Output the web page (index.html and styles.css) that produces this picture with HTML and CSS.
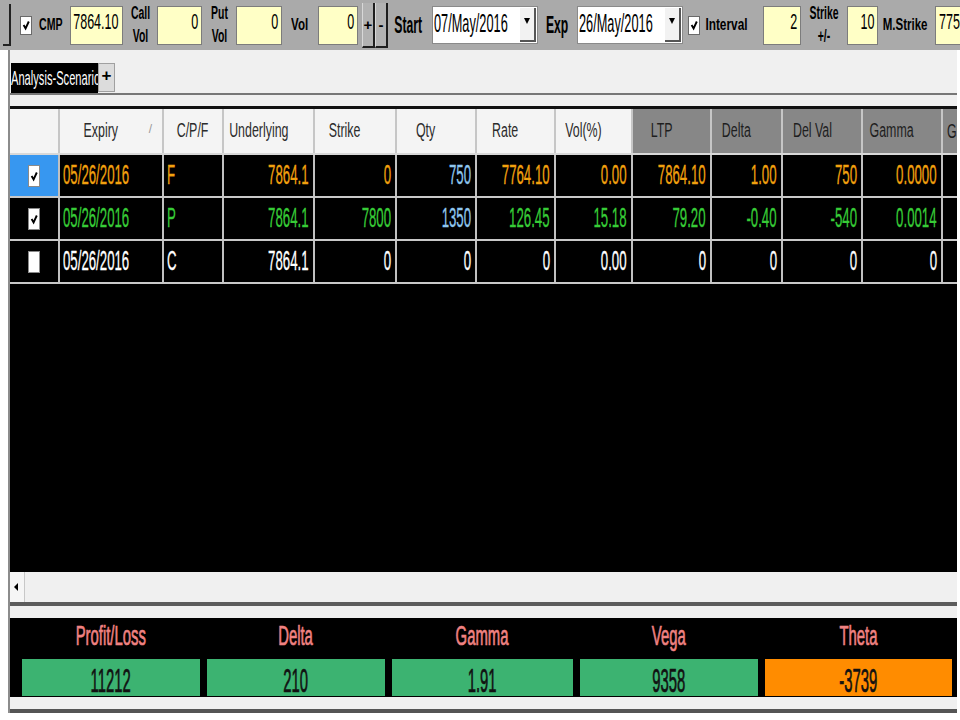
FILE: index.html
```html
<!DOCTYPE html>
<html lang="en">

<head>
    <meta charset="UTF-8">
    <title>Analysis-Scenario</title>
    <link rel="stylesheet" href="styles.css">
</head>

<body>
    <div class="toolbar">
        <div class="splitter"></div>
        <div class="tcb cb-cmp">
            <svg viewBox="0 0 10 14" preserveAspectRatio="none"><path d="M2 7 L4.5 11 L8.5 3" /></svg>
        </div>
        <div class="lbl l-cmp"><span class="sq">CMP</span></div>
        <div class="num n-cmp"><span class="sq">7864.10</span></div>
        <div class="lbl two l-call"><span class="sq">Call<br>Vol</span></div>
        <div class="num n-call"><span class="sq">0</span></div>
        <div class="lbl two l-put"><span class="sq">Put<br>Vol</span></div>
        <div class="num n-put"><span class="sq">0</span></div>
        <div class="lbl l-vol"><span class="sq">Vol</span></div>
        <div class="num n-vol"><span class="sq">0</span></div>
        <div class="pm plus">+</div>
        <div class="pm minus">-</div>
        <div class="lbl big l-start"><span class="sq">Start</span></div>
        <div class="date d-start">
            <div class="val"><span class="sq">07/May/2016</span></div>
            <div class="drop"><i></i></div>
        </div>
        <div class="lbl big l-exp"><span class="sq">Exp</span></div>
        <div class="date d-exp">
            <div class="val"><span class="sq">26/May/2016</span></div>
            <div class="drop"><i></i></div>
        </div>
        <div class="tcb cb-int">
            <svg viewBox="0 0 10 14" preserveAspectRatio="none"><path d="M2 7 L4.5 11 L8.5 3" /></svg>
        </div>
        <div class="lbl l-int"><span class="sq">Interval</span></div>
        <div class="num n-int"><span class="sq">2</span></div>
        <div class="lbl two l-strike"><span class="sq">Strike<br>+/-</span></div>
        <div class="num n-strike"><span class="sq">10</span></div>
        <div class="lbl l-mstrike"><span class="sq">M.Strike</span></div>
        <div class="num n-mstrike"><span class="sq">7750</span></div>
    </div>

    <div class="main">
        <div class="tabbar">
            <div class="tab"><span class="sq">Analysis-Scenario</span></div>
            <div class="tab-add">+</div>
        </div>

        <div class="grid">
            <div class="hrow">
                <div class="hc"></div>
                <div class="hc sort"><span class="sq">Expiry</span><em>/</em></div>
                <div class="hc mid"><span class="sq">C/P/F</span></div>
                <div class="hc"><span class="sq">Underlying</span></div>
                <div class="hc"><span class="sq">Strike</span></div>
                <div class="hc"><span class="sq">Qty</span></div>
                <div class="hc"><span class="sq">Rate</span></div>
                <div class="hc"><span class="sq">Vol(%)</span></div>
                <div class="hc dark"><span class="sq">LTP</span></div>
                <div class="hc dark"><span class="sq">Delta</span></div>
                <div class="hc dark"><span class="sq">Del Val</span></div>
                <div class="hc dark"><span class="sq">Gamma</span></div>
                <div class="hc dark g"><span class="sq">G</span></div>
            </div>

            <div class="row fut">
                <div class="c cbc sel"><div class="rcb"><svg viewBox="0 0 10 14" preserveAspectRatio="none"><path d="M2 7 L4.5 11 L8.5 3" /></svg></div></div>
                <div class="c l"><span class="sq">05/26/2016</span></div>
                <div class="c l"><span class="sq">F</span></div>
                <div class="c"><span class="sq">7864.1</span></div>
                <div class="c"><span class="sq">0</span></div>
                <div class="c qty"><span class="sq">750</span></div>
                <div class="c"><span class="sq">7764.10</span></div>
                <div class="c"><span class="sq">0.00</span></div>
                <div class="c"><span class="sq">7864.10</span></div>
                <div class="c"><span class="sq">1.00</span></div>
                <div class="c"><span class="sq">750</span></div>
                <div class="c"><span class="sq">0.0000</span></div>
                <div class="c"></div>
            </div>

            <div class="row put">
                <div class="c cbc"><div class="rcb"><svg viewBox="0 0 10 14" preserveAspectRatio="none"><path d="M2 7 L4.5 11 L8.5 3" /></svg></div></div>
                <div class="c l"><span class="sq">05/26/2016</span></div>
                <div class="c l"><span class="sq">P</span></div>
                <div class="c"><span class="sq">7864.1</span></div>
                <div class="c"><span class="sq">7800</span></div>
                <div class="c qty"><span class="sq">1350</span></div>
                <div class="c"><span class="sq">126.45</span></div>
                <div class="c"><span class="sq">15.18</span></div>
                <div class="c"><span class="sq">79.20</span></div>
                <div class="c"><span class="sq">-0.40</span></div>
                <div class="c"><span class="sq">-540</span></div>
                <div class="c"><span class="sq">0.0014</span></div>
                <div class="c"></div>
            </div>

            <div class="row call">
                <div class="c cbc"><div class="rcb"></div></div>
                <div class="c l"><span class="sq">05/26/2016</span></div>
                <div class="c l"><span class="sq">C</span></div>
                <div class="c"><span class="sq">7864.1</span></div>
                <div class="c"><span class="sq">0</span></div>
                <div class="c"><span class="sq">0</span></div>
                <div class="c"><span class="sq">0</span></div>
                <div class="c"><span class="sq">0.00</span></div>
                <div class="c"><span class="sq">0</span></div>
                <div class="c"><span class="sq">0</span></div>
                <div class="c"><span class="sq">0</span></div>
                <div class="c"><span class="sq">0</span></div>
                <div class="c"></div>
            </div>
        </div>

        <div class="hscroll">
            <div class="arrow"><i></i></div>
        </div>

        <div class="summary">
            <div class="s-labels">
                <div class="s-lbl"><span class="sq">Profit/Loss</span></div>
                <div class="s-lbl"><span class="sq">Delta</span></div>
                <div class="s-lbl"><span class="sq">Gamma</span></div>
                <div class="s-lbl"><span class="sq">Vega</span></div>
                <div class="s-lbl"><span class="sq">Theta</span></div>
            </div>
            <div class="s-vals">
                <div class="s-val"><span class="sq">11212</span></div>
                <div class="s-val"><span class="sq">210</span></div>
                <div class="s-val"><span class="sq">1.91</span></div>
                <div class="s-val"><span class="sq">9358</span></div>
                <div class="s-val neg"><span class="sq">-3739</span></div>
            </div>
        </div>

        <div class="foot"></div>
    </div>
</body>

</html>
```

FILE: styles.css
```css
* {
    box-sizing: border-box;
}

html,
body {
    margin: 0;
    background: #fff;
    font-family: 'Liberation Sans', Arial, sans-serif;
    color: #000;
}

/* condensed text, the app draws everything very narrow */
.sq {
    display: inline-block;
    flex-shrink: 0;
    white-space: nowrap;
    transform: scaleX(var(--sx, 0.6));
    transform-origin: center center;
}

/* ---------- toolbar ---------- */

.toolbar {
    height: 50px;
    background: #aaaaaa;
    display: flex;
    align-items: center;
    padding-left: 3px;
    overflow: hidden;
}

.toolbar > * {
    margin-left: 7px;
    flex-shrink: 0;
}

.splitter {
    margin-left: 0;
    width: 8px;
    height: 42px;
    border-right: 2px solid #222;
    border-bottom: 2px solid #222;
}

.tcb {
    width: 12px;
    height: 19px;
    background: #fff;
    border: 1px solid #6a6a6a;
    display: flex;
    align-items: center;
    justify-content: center;
}

.tcb svg,
.rcb svg {
    width: 8px;
    height: 12px;
}

.tcb path,
.rcb path {
    fill: none;
    stroke: #000;
    stroke-width: 2.4;
}

.cb-cmp {
    margin-left: 9px;
}

.cb-int {
    margin-left: 5px;
}

.lbl {
    display: flex;
    justify-content: center;
    font-weight: bold;
    font-size: 16px;
    --sx: 0.7;
}

.lbl.two {
    font-size: 18px;
    line-height: 23px;
    text-align: center;
    --sx: 0.58;
}

.lbl.big {
    font-size: 23px;
    --sx: 0.53;
}

.l-cmp { width: 24px; --sx: 0.66; }
.l-call { width: 20px; }
.l-put { width: 20px; }
.l-vol { width: 22px; font-size: 17px; --sx: 0.68; }
.l-start { width: 30px; margin-left: 5px; }
.l-exp { width: 25px; --sx: 0.58; }
.l-int { width: 43px; margin-left: 5px; --sx: 0.74; }
.l-strike { width: 33px; font-size: 16px; --sx: 0.72; }
.l-mstrike { width: 46px; margin-left: 4px; --sx: 0.72; }

.num {
    height: 39px;
    background: #ffffc6;
    border: 1px solid #7c7c7c;
    display: flex;
    justify-content: flex-end;
    align-items: center;
    padding: 0 3px 6px 0;
    font-size: 22px;
    --sx: 0.57;
}

.num .sq {
    transform-origin: right center;
}

.n-cmp { width: 53px; }
.n-call { width: 45px; }
.n-put { width: 46px; }
.n-vol { width: 40px; }
.n-int { width: 38px; margin-left: 15px; }
.n-strike { width: 31px; margin-left: 6px; }
.n-mstrike { width: 40px; justify-content: flex-start; padding-left: 3px; }
.n-mstrike .sq { transform-origin: left center; }

.pm {
    width: 13px;
    height: 45px;
    background: #b2b2b2;
    border-right: 2px solid #1e1e1e;
    border-bottom: 2px solid #1e1e1e;
    border-left: 1px solid #d8d8d8;
    display: flex;
    align-items: center;
    justify-content: center;
    font-weight: bold;
    font-size: 15px;
}

.plus {
    margin-left: 4px;
}

.minus {
    margin-left: 0;
}

.date {
    width: 106px;
    height: 38px;
    background: #fff;
    border: 1px solid #8a8a8a;
    display: flex;
    align-items: center;
}

.d-start {
    margin-left: 9px;
}

.date .val {
    flex: 1;
    display: flex;
    padding: 0 0 3px 1px;
    font-size: 25px;
    --sx: 0.51;
    overflow: hidden;
}

.date .val .sq {
    transform-origin: left center;
}

.date .drop {
    width: 16px;
    height: 34px;
    margin-right: 1px;
    background: #f2f2f2;
    border-right: 2px solid #555;
    border-bottom: 2px solid #555;
    display: flex;
    align-items: center;
    justify-content: center;
    padding-bottom: 6px;
}

.date .drop i {
    border-top: 6px solid #000;
    border-left: 3px solid transparent;
    border-right: 3px solid transparent;
}

/* ---------- main panel ---------- */

.main {
    margin-left: 8px;
    width: 949px;
    border-left: 2px solid #8c8c8c;
    background: #f0f0f0;
}

.tabbar {
    height: 45px;
    padding: 13px 0 0 1px;
    border-bottom: 2px solid #777;
    display: flex;
    align-items: flex-start;
}

.tab {
    width: 87px;
    height: 30px;
    background: #000;
    color: #fff;
    font-size: 21px;
    display: flex;
    align-items: center;
    overflow: hidden;
    --sx: 0.53;
}

.tab .sq {
    transform-origin: left center;
}

.tab-add {
    width: 17px;
    height: 29px;
    background: #dcdcdc;
    border: 1px solid #a0a0a0;
    display: flex;
    align-items: center;
    justify-content: center;
    font-weight: bold;
    font-size: 17px;
    padding-bottom: 3px;
}

.grid {
    margin-top: 11px;
    height: 466px;
    background: #000;
    border-top: 3px solid #111;
    overflow: hidden;
}

.hrow,
.row {
    display: grid;
    grid-template-columns: 50px 104px 60px 91px 82px 80px 79px 77px 79px 71px 80px 80px 30px;
}

.hrow {
    height: 46px;
    background: #f4f4f4;
    border-bottom: 2px solid #d8d8d8;
}

.hc {
    position: relative;
    border-right: 2px solid #c6c6c6;
    display: flex;
    align-items: center;
    justify-content: center;
    padding: 0 20px 2px 0;
    font-size: 20px;
    color: #2b2b2b;
    --sx: 0.62;
}

.hc.mid {
    padding-right: 0;
}

.hc.dark {
    background: #878787;
    color: #1e1e1e;
}

.hc.g {
    justify-content: flex-start;
    padding: 0 0 0 4px;
}

.hc.g .sq {
    transform-origin: left center;
}

.hc em {
    position: absolute;
    right: 10px;
    top: 13px;
    font-style: normal;
    font-size: 12px;
    color: #999;
}

.row {
    height: 43px;
    border-bottom: 2px solid #c8c8c8;
    font-size: 27px;
    --sx: 0.49;
}

.c {
    border-right: 2px solid #c0c0c0;
    display: flex;
    align-items: center;
    justify-content: flex-end;
    padding-right: 4px;
}

.c .sq {
    transform-origin: right center;
    -webkit-text-stroke: 0.3px currentColor;
}

.c.l {
    justify-content: flex-start;
    padding: 0 0 0 3px;
}

.c.l .sq {
    transform-origin: left center;
}

.c.cbc {
    justify-content: center;
    padding: 0;
}

.c.sel {
    background: #3797f0;
}

.rcb {
    width: 12px;
    height: 22px;
    background: #fff;
    border: 1px solid #8a8a8a;
    display: flex;
    align-items: center;
    justify-content: center;
}

.fut {
    color: #f2a10e;
}

.put {
    color: #37cc37;
}

.call {
    color: #fff;
}

.fut .qty,
.put .qty {
    color: #8ec6ee;
}

.hscroll {
    height: 34px;
    border-bottom: 4px solid #5c5c5c;
    background: #f0f0f0;
}

.arrow {
    width: 15px;
    height: 30px;
    background: #f6f6f6;
    border-right: 1px solid #c8c8c8;
    display: flex;
    align-items: center;
    padding-left: 4px;
}

.arrow i {
    border-right: 4px solid #000;
    border-top: 4px solid transparent;
    border-bottom: 4px solid transparent;
}

/* ---------- summary ---------- */

.summary {
    margin-top: 12px;
    height: 79px;
    background: #000;
    padding: 0 5px 1px 12px;
}

.s-labels,
.s-vals {
    display: grid;
    grid-template-columns: 178px 178px 181px 178px 187px;
    column-gap: 7px;
}

.s-labels {
    height: 41px;
}

.s-lbl {
    display: flex;
    align-items: center;
    justify-content: center;
    padding-bottom: 4px;
    color: #f08282;
    font-size: 27px;
    --sx: 0.55;
}

.s-lbl .sq,
.s-val .sq {
    -webkit-text-stroke: 0.7px currentColor;
}

.s-val {
    height: 37px;
    background: #3cb371;
    display: flex;
    align-items: center;
    justify-content: center;
    padding-top: 6px;
    font-size: 33px;
    color: #111;
    --sx: 0.45;
}

.s-val.neg {
    background: #ff8c00;
}

.foot {
    margin-top: 12px;
    height: 4px;
    background: #555;
}
```
